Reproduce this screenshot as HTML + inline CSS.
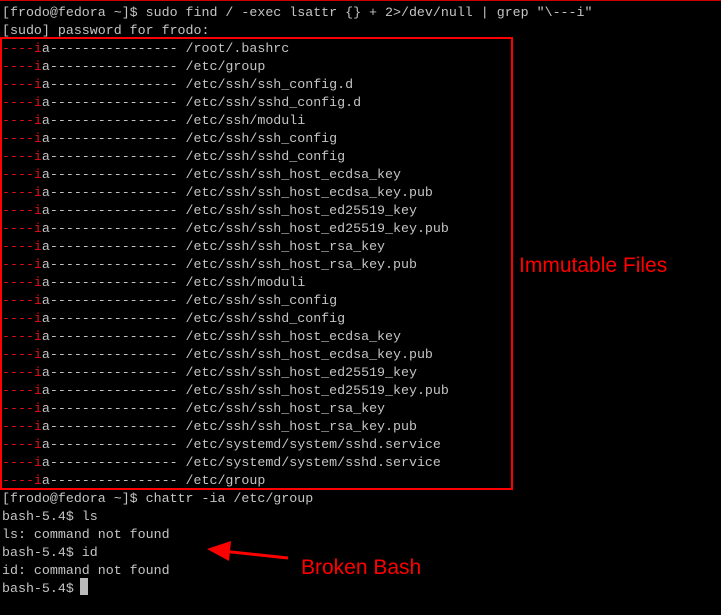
<!DOCTYPE html>
<html><head><style>
html,body{margin:0;padding:0;background:#000;width:721px;height:615px;overflow:hidden}
.t{position:absolute;left:2px;top:4px;font-family:"Liberation Mono",monospace;font-size:13.3px;line-height:18px;color:#c4c4c4;white-space:pre}
.r{color:#e01010}
.box{position:absolute;left:0;top:37px;width:509px;height:449px;border:2px solid #f00}
.lbl{position:absolute;font-family:"Liberation Sans",sans-serif;font-size:21px;color:#f00}
.cur{position:absolute;left:80px;top:578px;width:8px;height:17px;background:#bbb}
</style></head><body>
<div style="position:absolute;left:0;top:0;width:721px;height:1px;background:#c00"></div>
<div class="t">[frodo@fedora ~]$ sudo find / -exec lsattr {} + 2&gt;/dev/null | grep "\---i"
[sudo] password for frodo:
<span class="r">----i</span>a---------------- /root/.bashrc
<span class="r">----i</span>a---------------- /etc/group
<span class="r">----i</span>a---------------- /etc/ssh/ssh_config.d
<span class="r">----i</span>a---------------- /etc/ssh/sshd_config.d
<span class="r">----i</span>a---------------- /etc/ssh/moduli
<span class="r">----i</span>a---------------- /etc/ssh/ssh_config
<span class="r">----i</span>a---------------- /etc/ssh/sshd_config
<span class="r">----i</span>a---------------- /etc/ssh/ssh_host_ecdsa_key
<span class="r">----i</span>a---------------- /etc/ssh/ssh_host_ecdsa_key.pub
<span class="r">----i</span>a---------------- /etc/ssh/ssh_host_ed25519_key
<span class="r">----i</span>a---------------- /etc/ssh/ssh_host_ed25519_key.pub
<span class="r">----i</span>a---------------- /etc/ssh/ssh_host_rsa_key
<span class="r">----i</span>a---------------- /etc/ssh/ssh_host_rsa_key.pub
<span class="r">----i</span>a---------------- /etc/ssh/moduli
<span class="r">----i</span>a---------------- /etc/ssh/ssh_config
<span class="r">----i</span>a---------------- /etc/ssh/sshd_config
<span class="r">----i</span>a---------------- /etc/ssh/ssh_host_ecdsa_key
<span class="r">----i</span>a---------------- /etc/ssh/ssh_host_ecdsa_key.pub
<span class="r">----i</span>a---------------- /etc/ssh/ssh_host_ed25519_key
<span class="r">----i</span>a---------------- /etc/ssh/ssh_host_ed25519_key.pub
<span class="r">----i</span>a---------------- /etc/ssh/ssh_host_rsa_key
<span class="r">----i</span>a---------------- /etc/ssh/ssh_host_rsa_key.pub
<span class="r">----i</span>a---------------- /etc/systemd/system/sshd.service
<span class="r">----i</span>a---------------- /etc/systemd/system/sshd.service
<span class="r">----i</span>a---------------- /etc/group
[frodo@fedora ~]$ chattr -ia /etc/group
bash-5.4$ ls
ls: command not found
bash-5.4$ id
id: command not found
bash-5.4$ </div>
<div class="box"></div>
<div class="lbl" style="left:519px;top:254px">Immutable Files</div>
<div class="lbl" style="left:301px;top:556px">Broken Bash</div>
<svg style="position:absolute;left:0;top:0" width="721" height="615">
<line x1="288" y1="558" x2="222" y2="551" stroke="#f00" stroke-width="3"/>
<polygon points="207,549 231,541 229,561" fill="#f00"/>
</svg>
<div class="cur"></div>
</body></html>
